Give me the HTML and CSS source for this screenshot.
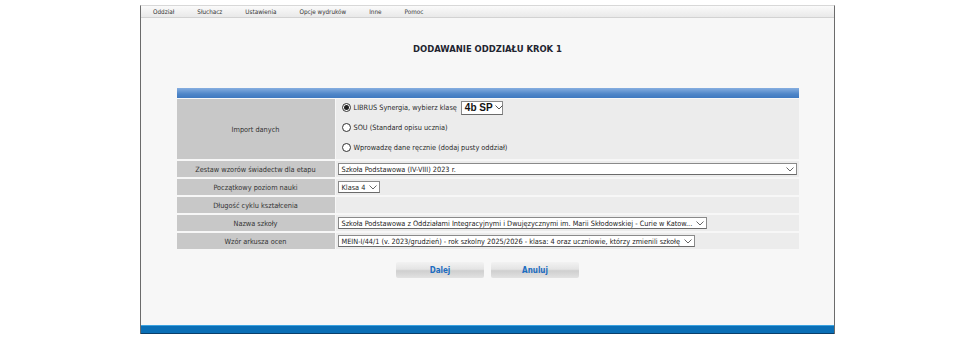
FILE: index.html
```html
<!DOCTYPE html>
<html lang="pl">
<head>
<meta charset="utf-8">
<title>Dodawanie oddziału</title>
<link rel="stylesheet" href="styles.css">
</head>
<body>
<div class="frame">
  <nav class="menubar">
    <span class="menu-item">Oddział</span>
    <span class="menu-item">Słuchacz</span>
    <span class="menu-item">Ustawienia</span>
    <span class="menu-item">Opcje wydruków</span>
    <span class="menu-item">Inne</span>
    <span class="menu-item">Pomoc</span>
  </nav>
  <main class="content">
    <h1 class="title">DODAWANIE ODDZIAŁU KROK 1</h1>
    <div class="form">
      <div class="form-head"></div>
      <div class="row row-import">
        <div class="label">Import danych</div>
        <div class="value options">
          <div class="option">
            <span class="radio checked"></span>
            <span>LIBRUS Synergia, wybierz klasę</span>
            <span class="select select-big"><span class="sel-text">4b SP</span><svg class="chev" viewBox="0 0 8 5" width="8" height="5"><path d="M0.5 0.5 L4 4 L7.5 0.5" fill="none" stroke="#555" stroke-width="1"/></svg></span>
          </div>
          <div class="option">
            <span class="radio"></span>
            <span>SOU (Standard opisu ucznia)</span>
          </div>
          <div class="option">
            <span class="radio"></span>
            <span>Wprowadzę dane ręcznie (dodaj pusty oddział)</span>
          </div>
        </div>
      </div>
      <div class="row">
        <div class="label">Zestaw wzorów świadectw dla etapu</div>
        <div class="value">
          <span class="select select-wide"><span class="sel-text">Szkoła Podstawowa (IV-VIII) 2023 r.</span><svg class="chev" viewBox="0 0 8 5" width="8" height="5"><path d="M0.5 0.5 L4 4 L7.5 0.5" fill="none" stroke="#666" stroke-width="1"/></svg></span>
        </div>
      </div>
      <div class="row">
        <div class="label">Początkowy poziom nauki</div>
        <div class="value">
          <span class="select"><span class="sel-text">Klasa 4</span><svg class="chev" viewBox="0 0 8 5" width="8" height="5"><path d="M0.5 0.5 L4 4 L7.5 0.5" fill="none" stroke="#666" stroke-width="1"/></svg></span>
        </div>
      </div>
      <div class="row">
        <div class="label">Długość cyklu kształcenia</div>
        <div class="value"></div>
      </div>
      <div class="row">
        <div class="label">Nazwa szkoły</div>
        <div class="value">
          <span class="select"><span class="sel-text">Szkoła Podstawowa z Oddziałami Integracyjnymi i Dwujęzycznymi im. Marii Skłodowskiej - Curie w Katow...</span><svg class="chev" viewBox="0 0 8 5" width="8" height="5"><path d="M0.5 0.5 L4 4 L7.5 0.5" fill="none" stroke="#666" stroke-width="1"/></svg></span>
        </div>
      </div>
      <div class="row">
        <div class="label">Wzór arkusza ocen</div>
        <div class="value">
          <span class="select"><span class="sel-text">MEIN-I/44/1 (v. 2023/grudzień) - rok szkolny 2025/2026 - klasa: 4 oraz uczniowie, którzy zmienili szkołę</span><svg class="chev" viewBox="0 0 8 5" width="8" height="5"><path d="M0.5 0.5 L4 4 L7.5 0.5" fill="none" stroke="#666" stroke-width="1"/></svg></span>
        </div>
      </div>
    </div>
    <div class="buttons">
      <span class="btn">Dalej</span>
      <span class="btn">Anuluj</span>
    </div>
  </main>
  <footer class="footer"></footer>
</div>
</body>
</html>
```

FILE: styles.css
```css
* { box-sizing: border-box; }
html, body { margin: 0; padding: 0; background: #ffffff; }
body {
  font-family: "DejaVu Sans Condensed", "DejaVu Sans", sans-serif;
  color: #2a2a2a;
  font-size: 7.3px;
}
.frame {
  margin: 5px 0 0 140px;
  width: 695px;
  height: 329px;
  border-left: 1px solid #6b6b6b;
  border-right: 1px solid #6b6b6b;
  border-top: 1px solid #d8d8d8;
  background: #f7f7f7;
  display: flex;
  flex-direction: column;
}
.menubar {
  height: 12px;
  display: flex;
  align-items: center;
  gap: 23px;
  padding-left: 12px;
  background: linear-gradient(#fafafa, #e9e9e9);
  border-bottom: 1px solid #d2d2d2;
  font-size: 6.3px;
  color: #333;
}
.content {
  flex: 1;
  display: flex;
  flex-direction: column;
  align-items: center;
}
.title {
  margin: 25px 0 0;
  font-size: 9.4px;
  font-weight: bold;
  color: #1f2530;
  height: 12px;
  line-height: 12px;
}
.form {
  margin-top: 33px;
  width: 622px;
  display: flex;
  flex-direction: column;
  gap: 2px;
}
.form-head {
  height: 10px;
  background: linear-gradient(#86aee0, #4f86c8 60%, #3f79c0);
  margin-bottom: -1px;
}
.row {
  display: flex;
  height: 16px;
  gap: 1px;
}
.row-import { height: 60px; }
.label {
  width: 158px;
  background: #c8c8c8;
  display: flex;
  align-items: center;
  justify-content: center;
  color: #333;
}
.value {
  flex: 1;
  background: #ececec;
  display: flex;
  align-items: center;
  padding-left: 2px;
}
.options {
  flex-direction: column;
  align-items: flex-start;
  justify-content: flex-start;
  padding: 2px 0 0 6px;
  gap: 7px;
}
.option {
  display: flex;
  align-items: center;
  gap: 2px;
  height: 13px;
}
.radio {
  width: 9px;
  height: 9px;
  border: 1px solid #333;
  border-radius: 50%;
  background: #fff;
  display: inline-flex;
  align-items: center;
  justify-content: center;
  margin-right: 1px;
}
.radio.checked::after {
  content: "";
  width: 5px;
  height: 5px;
  border-radius: 50%;
  background: #222;
}
.select {
  display: inline-flex;
  align-items: center;
  height: 12px;
  background: #fff;
  border: 1px solid #8a8a8a;
  border-bottom-color: #6a6a6a;
  padding: 0 2px 0 3px;
  gap: 4px;
  white-space: nowrap;
  color: #222;
}
.select-wide {
  width: 459px;
  justify-content: space-between;
}
.select-big {
  width: 42px;
  height: 14px;
  justify-content: space-between;
  font-family: "Liberation Sans", Arial, sans-serif;
  font-size: 10px;
  font-weight: bold;
  color: #111;
  padding: 0 2px 0 3px;
  gap: 2px;
  margin-left: 2px;
}
.chev { display: block; flex: none; }
.buttons {
  margin-top: 13px;
  display: flex;
  gap: 7px;
}
.btn {
  width: 88px;
  height: 16px;
  display: flex;
  align-items: center;
  justify-content: center;
  font-weight: bold;
  font-size: 8px;
  color: #1c6cc0;
  background: linear-gradient(#f2f2f2, #e4e4e4 45%, #cfcfcf 55%, #e2e2e2);
  border-radius: 2px;
}
.footer {
  height: 9px;
  background: #0a6fb6;
  border-top: 1px solid #3aa2e0;
  border-bottom: 1px solid #0a3f6a;
}
```
